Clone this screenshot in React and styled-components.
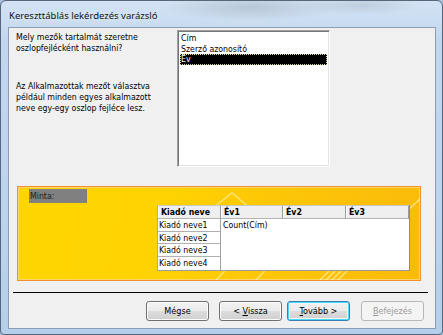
import styled, { createGlobalStyle } from "styled-components";

const GlobalStyle = createGlobalStyle`
  html, body { margin: 0; padding: 0; background: #aac2de; }
  body { width: 443px; height: 335px; overflow: hidden; }
  * { box-sizing: border-box; }
`;

const Window = styled.div`
  position: relative;
  width: 443px;
  height: 335px;
  border: 1px solid #56677d;
  border-radius: 6px 6px 4px 4px;
  background:
    radial-gradient(ellipse 90px 14px at 250px 6px, rgba(140, 150, 165, 0.35), transparent),
    radial-gradient(ellipse 60px 10px at 360px 4px, rgba(150, 160, 170, 0.3), transparent),
    linear-gradient(180deg, #d3e3f4 0%, #c2d7ee 12%, #bdd4ed 60%, #b5cfea 100%);
  display: flex;
  flex-direction: column;
  padding: 0 6px 5px 7px;
  font-family: "DejaVu Sans Condensed", "DejaVu Sans", sans-serif;
  font-size: 8.7px;
  color: #000;
  overflow: hidden;
`;

const TitleBar = styled.div`
  height: 26px;
  display: flex;
  align-items: center;
  padding: 2px 0 0 1px;
  font-family: "Noto Sans", "Open Sans", sans-serif;
  font-size: 9.5px;
  color: #111;
  text-shadow: 0 0 6px rgba(255, 255, 255, 0.9);
`;

const Client = styled.div`
  flex: 1;
  display: flex;
  flex-direction: column;
  background: #f0f0f0;
  border: 1px solid #8b9db5;
`;

const TopRow = styled.div`
  display: flex;
  margin-top: 2px;
`;

const Prompt = styled.div`
  width: 168px;
  padding: 2px 0 0 7px;
  line-height: 10.7px;

  p {
    margin: 0 0 28px;
  }
`;

const ListBox = styled.div`
  width: 153px;
  height: 137px;
  background: #fff;
  border: 1px solid;
  border-color: #a0a0a0 #ffffff #ffffff #a0a0a0;
  box-shadow: inset 1px 1px 0 #767676, inset -1px -1px 0 #e3e3e3;
  padding: 2px 2px 0 2px;
  display: flex;
  flex-direction: column;
`;

const ListItem = styled.div`
  height: 10.7px;
  line-height: 10.7px;
  padding-left: 1px;
  white-space: nowrap;
  background: ${(p) => (p.selected ? "#000" : "transparent")};
  color: ${(p) => (p.selected ? "#fff" : "#000")};
  outline: ${(p) => (p.selected ? "1px dotted #d8d8a0" : "none")};
  outline-offset: -1px;
`;

const Panel = styled.div`
  position: relative;
  margin: 19px 0 0 8px;
  width: 404px;
  height: 95px;
  border: 1px solid #f0922c;
  box-shadow: inset 0 0 0 1px #fcd46a;
  background: linear-gradient(100deg, #ffd500 0%, #ffd300 35%, #fdc707 60%, #fbba0a 100%);
  overflow: hidden;
  display: flex;
  flex-direction: column;
  align-items: flex-start;
`;

const Decor = styled.svg`
  position: absolute;
  inset: 0;
  pointer-events: none;
`;

const SampleLabel = styled.div`
  position: relative;
  margin: 2px 0 0 11px;
  width: 58px;
  height: 14px;
  line-height: 14px;
  padding-left: 1px;
  background: #808080;
  color: #1c1c1c;
`;

const Grid = styled.div`
  position: relative;
  margin: 2px 0 0 139px;
  display: grid;
  grid-template-columns: 63px 62px 63px 63px;
  grid-template-rows: 13px repeat(4, 12.7px);
  width: 253px;
  border-left: 1px solid #a8a8a8;
  border-top: 1px solid #c8c8c8;
  border-right: 2px solid #8c8c8c;
  border-bottom: 1px solid #9c9c9c;
  background: #fff;
`;

const HeadCell = styled.div`
  background: #efefef;
  font-weight: bold;
  padding-left: 3px;
  line-height: 12px;
  border-right: 1px solid #9a9a9a;
  border-bottom: 1px solid #b4b4b4;
  box-shadow: inset 1px 0 0 #ffffff;
  white-space: nowrap;
`;

const RowCell = styled.div`
  background: #fff;
  padding-left: 1px;
  line-height: 12px;
  border-right: 1px solid #a0a0a0;
  border-bottom: ${(p) => (p.last ? "none" : "1px solid #b0b0b0")};
  white-space: nowrap;
`;

const DataArea = styled.div`
  grid-column: 2 / 5;
  grid-row: 2 / 6;
  background: #fff;
  padding: 1px 0 0 2px;
  line-height: 11px;
`;

const Separator = styled.div`
  margin: 11px 0 0 4px;
  width: 415px;
  height: 1px;
  background: #000;
`;

const ButtonRow = styled.div`
  display: flex;
  justify-content: flex-end;
  margin-top: 8px;
  padding-right: 11px;
`;

const Button = styled.button`
  width: 63px;
  height: 20px;
  margin-left: ${(p) => p.gap || 0}px;
  padding: 0;
  font-family: inherit;
  font-size: 9px;
  border-radius: 3px;
  border: 1px solid ${(p) => (p.disabled ? "#b5b9bd" : p.primary ? "#3c7fb1" : "#707070")};
  color: ${(p) => (p.disabled ? "#9a9a9a" : "#000")};
  background: ${(p) =>
    p.disabled
      ? "#f4f4f4"
      : "linear-gradient(180deg, #f2f2f2 0%, #ebebeb 50%, #dddddd 50%, #cfcfcf 100%)"};
  box-shadow: ${(p) =>
    p.disabled
      ? "none"
      : p.primary
      ? "inset 0 0 0 1px #48d8fb, inset 0 0 0 2px #f4f4f4"
      : "inset 0 0 0 1px #fcfcfc"};

  u {
    text-decoration: underline;
    text-underline-offset: 1px;
  }
`;

const rows = ["Kiadó neve1", "Kiadó neve2", "Kiadó neve3", "Kiadó neve4"];

export default function App() {
  return (
    <>
      <GlobalStyle />
      <Window>
        <TitleBar>Kereszttáblás lekérdezés varázsló</TitleBar>
        <Client>
          <TopRow>
            <Prompt>
              <p>
                Mely mezők tartalmát szeretne
                <br />
                oszlopfejlécként használni?
              </p>
              <p>
                Az Alkalmazottak mezőt választva
                <br />
                például minden egyes alkalmazott
                <br />
                neve egy-egy oszlop fejléce lesz.
              </p>
            </Prompt>
            <ListBox>
              <ListItem>Cím</ListItem>
              <ListItem>Szerző azonosító</ListItem>
              <ListItem selected>Év</ListItem>
            </ListBox>
          </TopRow>

          <Panel>
            <Decor width="404" height="95" viewBox="0 0 404 95">
              <g stroke="#fff6c0" strokeOpacity="0.6" fill="none" strokeWidth="1.5">
                <path d="M186 28 L214 6 L238 26" />
                <path d="M196 95 L250 40" />
                <path d="M300 95 L330 65" />
                <path d="M306 95 L336 65" />
                <path d="M312 95 L342 65" />
                <path d="M318 95 L348 65" />
                <path d="M372 40 L404 10" />
                <path d="M236 95 L275 55" />
              </g>
            </Decor>
            <SampleLabel>Minta:</SampleLabel>
            <Grid>
              <HeadCell>Kiadó neve</HeadCell>
              <HeadCell>Év1</HeadCell>
              <HeadCell>Év2</HeadCell>
              <HeadCell>Év3</HeadCell>
              {rows.map((r, i) => (
                <RowCell key={r} last={i === rows.length - 1} style={{ gridRow: i + 2 }}>
                  {r}
                </RowCell>
              ))}
              <DataArea>Count(Cím)</DataArea>
            </Grid>
          </Panel>

          <Separator />
          <ButtonRow>
            <Button>Mégse</Button>
            <Button gap={10}>
              &lt; <u>V</u>issza
            </Button>
            <Button gap={5} primary>
              <u>T</u>ovább &gt;
            </Button>
            <Button gap={11} disabled>
              <u>B</u>efejezés
            </Button>
          </ButtonRow>
        </Client>
      </Window>
    </>
  );
}
